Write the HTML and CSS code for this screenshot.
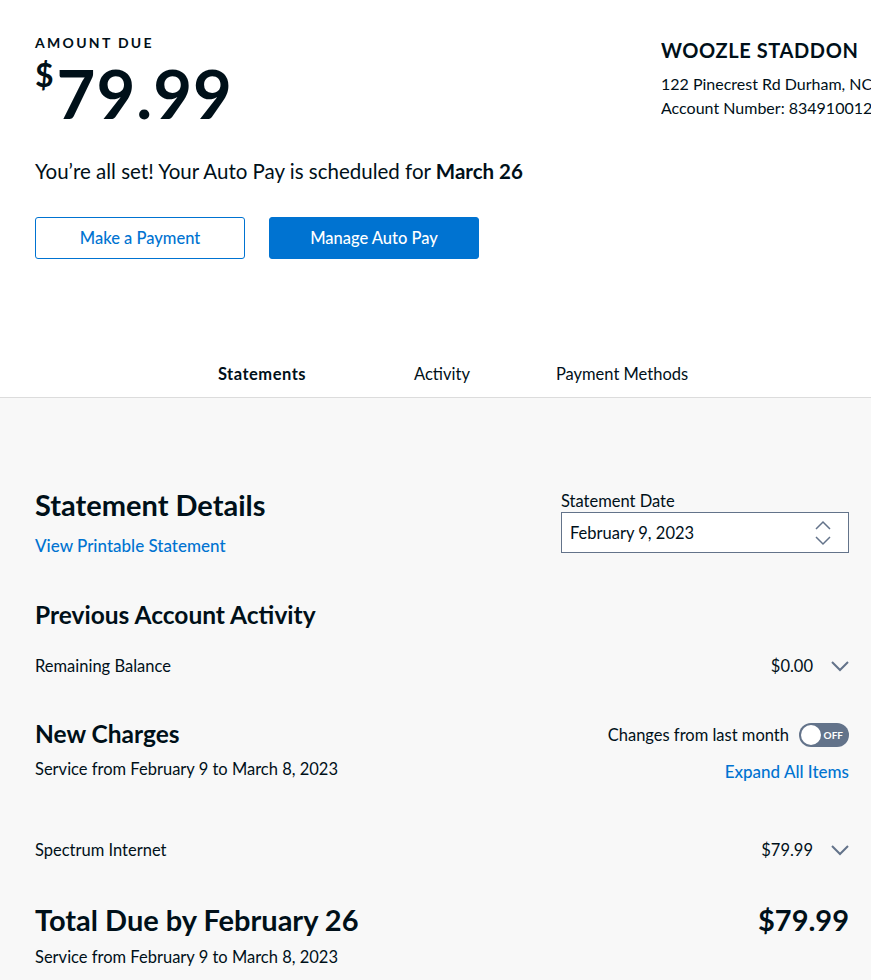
FILE: index.html
```
<!DOCTYPE html>
<html>
<head>
<meta charset="utf-8">
<link rel="stylesheet" href="styles.css">
</head>
<body>
<div class="top">
  <div class="summary">
    <div class="label">AMOUNT DUE</div>
    <div class="amount"><span class="dollar">$</span>79.99</div>
    <p class="autopay">You’re all set! Your Auto Pay is scheduled for <b>March 26</b></p>
    <div class="buttons">
      <button class="btn btn-outline">Make a Payment</button>
      <button class="btn btn-solid">Manage Auto Pay</button>
    </div>
  </div>
  <div class="account">
    <div class="name">WOOZLE STADDON</div>
    <div class="line">122 Pinecrest Rd Durham, NC</div>
    <div class="line">Account Number: 834910012</div>
  </div>
</div>
<nav class="tabs">
  <span class="tab active">Statements</span>
  <span class="tab">Activity</span>
  <span class="tab">Payment Methods</span>
</nav>
<main class="details">
  <div class="row head-row">
    <div>
      <h1 class="h1">Statement Details</h1>
      <a class="link">View Printable Statement</a>
    </div>
    <div class="date-field">
      <div class="date-label">Statement Date</div>
      <div class="select">
        <span>February 9, 2023</span>
        <svg class="updown" width="20" height="28" viewBox="0 0 20 28"><path d="M3 10 L10 3 L17 10" fill="none" stroke="#63738a" stroke-width="1.5"/><path d="M3 18 L10 25 L17 18" fill="none" stroke="#63738a" stroke-width="1.5"/></svg>
      </div>
    </div>
  </div>

  <h2 class="h2 prev">Previous Account Activity</h2>
  <div class="row item">
    <span>Remaining Balance</span>
    <span class="price">$0.00 <svg class="chev" width="18" height="11" viewBox="0 0 18 11"><path d="M1 1 L9 9 L17 1" fill="none" stroke="#63738a" stroke-width="2"/></svg></span>
  </div>

  <div class="row charges">
    <div>
      <h2 class="h2">New Charges</h2>
      <div class="sub">Service from February 9 to March 8, 2023</div>
    </div>
    <div class="right-col">
      <div class="changes">Changes from last month <span class="toggle"><span class="knob"></span><span class="off">OFF</span></span></div>
      <a class="link">Expand All Items</a>
    </div>
  </div>

  <div class="row item internet">
    <span>Spectrum Internet</span>
    <span class="price">$79.99 <svg class="chev" width="18" height="11" viewBox="0 0 18 11"><path d="M1 1 L9 9 L17 1" fill="none" stroke="#63738a" stroke-width="2"/></svg></span>
  </div>

  <div class="row total">
    <h1 class="h1">Total Due by February 26</h1>
    <span class="h1">$79.99</span>
  </div>
  <div class="sub">Service from February 9 to March 8, 2023</div>
</main>
</body>
</html>
```
FILE: styles.css
```
html, body {
  margin: 0;
  padding: 0;
  overflow: hidden;
}
body {
  font-family: Lato, "Open Sans", sans-serif;
  color: #001019;
  background: #f8f8f8;
  width: 871px;
}
.top {
  background: #fff;
  display: flex;
  padding: 34px 0 0 35px;
  height: 306px;
}
.summary {
  flex: 1;
}
.label {
  font-size: 14px;
  font-weight: 700;
  letter-spacing: 2.3px;
  line-height: 17px;
}
.amount {
  font-size: 67px;
  font-weight: 700;
  line-height: 72px;
  margin-top: 6px;
  letter-spacing: 1px;
}
.dollar {
  font-size: 32px;
  vertical-align: top;
  line-height: 36px;
  margin-right: 2px;
}
.autopay {
  font-size: 20.5px;
  margin: 29px 0 0;
  line-height: 26px;
}
.autopay b { font-weight: 700; }
.buttons {
  display: flex;
  gap: 24px;
  margin-top: 33px;
}
.btn {
  width: 210px;
  height: 42px;
  border-radius: 3px;
  font-family: inherit;
  font-size: 16.5px;
  font-weight: 500;
}
.btn-outline {
  background: #fff;
  border: 1px solid #0073d1;
  color: #0073d1;
}
.btn-solid {
  background: #0073d1;
  border: 1px solid #0073d1;
  color: #fff;
}
.account {
  width: 210px;
  white-space: nowrap;
  overflow: hidden;
  padding-top: 4px;
}
.name {
  font-size: 20px;
  font-weight: 700;
  letter-spacing: 0.6px;
  line-height: 24px;
  margin-bottom: 10px;
}
.line {
  font-size: 16px;
  line-height: 24px;
}
.tabs {
  background: #fff;
  display: flex;
  justify-content: center;
  padding-left: 13px;
  height: 57px;
  border-bottom: 1px solid #dcdcdc;
}
.tab {
  width: 180px;
  text-align: center;
  font-size: 16.5px;
  line-height: 20px;
  padding-top: 24px;
}
.tab.active { font-weight: 700; letter-spacing: 0.5px; }
.details {
  padding: 90px 22px 0 35px;
}
.row {
  display: flex;
  justify-content: space-between;
}
.h1 {
  font-size: 29px;
  font-weight: 700;
  margin: 0;
  line-height: 34px;
}
.h2 {
  font-size: 24.5px;
  font-weight: 700;
  margin: 0;
  line-height: 30px;
}
.link {
  display: block;
  color: #0073d1;
  font-size: 17px;
  font-weight: 500;
  margin-top: 14px;
  line-height: 20px;
}
.date-field {
  width: 288px;
  margin-top: 3px;
}
.date-label {
  font-size: 16.5px;
  line-height: 20px;
  margin-bottom: 1px;
}
.select {
  height: 39px;
  border: 1px solid #63738a;
  background: #fff;
  display: flex;
  align-items: center;
  justify-content: space-between;
  padding: 0 15px 0 8px;
  font-size: 16.5px;
}
.prev {
  margin-top: 44px;
}
.item {
  font-size: 16.5px;
  margin-top: 26px;
  align-items: center;
  line-height: 20px;
}
.price {
  display: flex;
  align-items: center;
  gap: 18px;
}
.charges {
  margin-top: 43px;
}
.sub {
  font-size: 16.5px;
  line-height: 20px;
  margin-top: 10px;
}
.right-col {
  text-align: right;
}
.changes {
  display: flex;
  align-items: center;
  gap: 10px;
  font-size: 16.5px;
  margin-top: 4px;
}
.toggle {
  width: 50px;
  height: 24px;
  border-radius: 12px;
  background: #63738a;
  position: relative;
  display: inline-block;
}
.knob {
  position: absolute;
  left: 2px;
  top: 2px;
  width: 20px;
  height: 20px;
  border-radius: 50%;
  background: #fff;
}
.off {
  position: absolute;
  right: 6px;
  top: 6px;
  font-size: 10px;
  line-height: 12px;
  font-weight: 700;
  color: #fff;
}
.right-col .link {
  margin-top: 15px;
}
.internet {
  margin-top: 58px;
}
.total {
  margin-top: 43px;
}
```
